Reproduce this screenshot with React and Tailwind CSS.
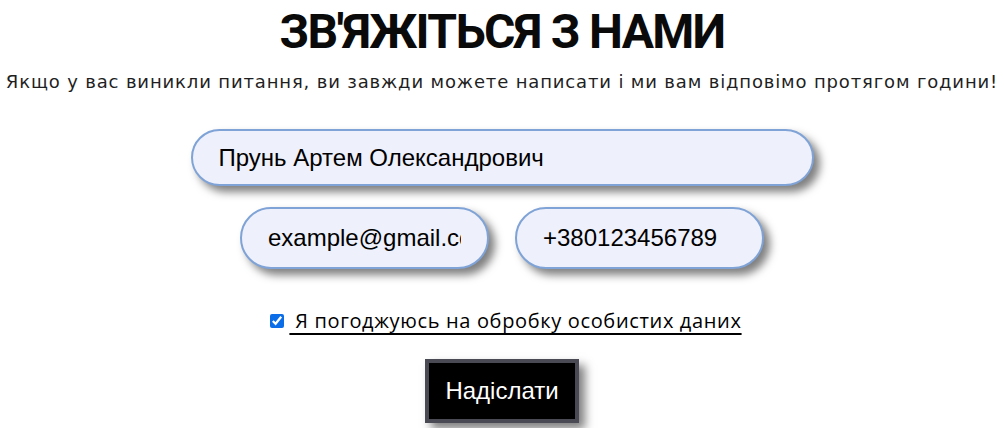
import React, { useState } from "react";

const App = () => {
  const [form, setForm] = useState({
    name: "Прунь Артем Олександрович",
    email: "example@gmail.com",
    phone: "+380123456789",
    agree: true,
  });

  const handleChange = (e) => {
    const { name, value, type, checked } = e.target;
    setForm((prev) => ({ ...prev, [name]: type === "checkbox" ? checked : value }));
  };

  const inputClass =
    "rounded-full border-2 border-[#7fa3d6] bg-[#eef0fb] text-[24px] text-black outline-none shadow-[6px_6px_9px_rgba(0,0,0,0.5)] font-['Liberation_Sans',Arial,sans-serif]";

  return (
    <div className="min-h-screen bg-white flex flex-col items-center">
      <h1 className="mt-[6px] h-[52px] leading-[52px] text-[48px] font-bold tracking-[-0.035em] text-[#0a0a0a] font-['Roboto',sans-serif]">
        ЗВ'ЯЖІТЬСЯ З НАМИ
      </h1>

      <p className="mt-[12px] text-[18px] leading-[24px] tracking-[0.85px] text-[#1f1f1f] font-['DejaVu_Sans',sans-serif] whitespace-nowrap">
        Якщо у вас виникли питання, ви завжди можете написати і ми вам відповімо протягом години!
      </p>

      <form className="flex flex-col items-center" onSubmit={(e) => e.preventDefault()}>
        <input
          name="name"
          value={form.name}
          onChange={handleChange}
          className={`${inputClass} mt-[35px] w-[623px] h-[57px] pl-[26px]`}
        />

        <div className="mt-[21px] flex gap-[26px]">
          <input
            name="email"
            value={form.email}
            onChange={handleChange}
            className={`${inputClass} w-[249px] h-[62px] px-[26px]`}
          />
          <input
            name="phone"
            value={form.phone}
            onChange={handleChange}
            className={`${inputClass} w-[249px] h-[62px] px-[26px]`}
          />
        </div>

        <label className="mt-[40px] ml-[8px] flex items-center text-[20px] leading-[24px] tracking-[0.65px] text-black font-['Open_Sans',sans-serif] font-medium underline decoration-2 underline-offset-[5px]">
          <input
            type="checkbox"
            name="agree"
            checked={form.agree}
            onChange={handleChange}
            className="w-[14px] h-[14px] mr-[5px] accent-[#0b6ee8]"
          />
          <span>&nbsp;Я погоджуюсь на обробку особистих даних</span>
        </label>

        <button
          type="submit"
          className="mt-[26px] w-[154px] h-[64px] bg-black text-white text-[24px] border-[4px] border-[#4a4a55] shadow-[6px_6px_9px_rgba(0,0,0,0.5)] font-['Liberation_Sans',Arial,sans-serif]"
        >
          Надіслати
        </button>
      </form>
    </div>
  );
};

export default App;
